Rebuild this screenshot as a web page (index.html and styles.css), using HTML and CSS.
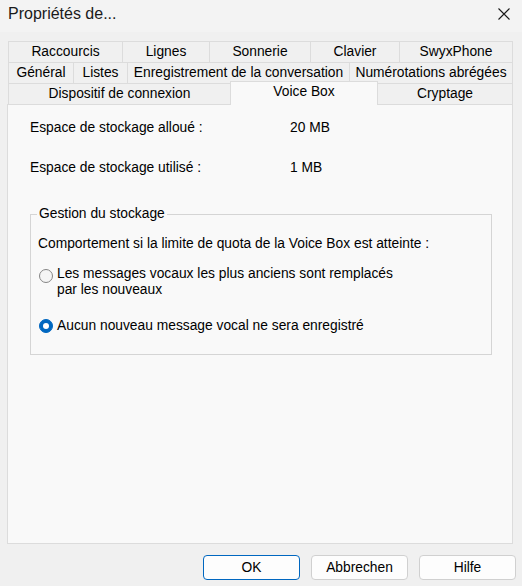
FILE: index.html
```html
<!DOCTYPE html>
<html lang="fr">
<head>
    <meta charset="UTF-8">
    <meta name="viewport" content="width=device-width, initial-scale=1.0">
    <title>Propriétés de...</title>
    <link rel="stylesheet" href="styles.css">
</head>
<body>
    <div class="titlebar">
        <span class="title">Propriétés de...</span>
        <button class="close" aria-label="Fermer">
            <svg width="12" height="12" viewBox="0 0 12 12">
                <path d="M0.5 0.5 L11.5 11.5 M11.5 0.5 L0.5 11.5" stroke="#1a1a1a" stroke-width="1.1" fill="none"/>
            </svg>
        </button>
    </div>

    <div class="tabs">
        <div class="tab-row row1">
            <div class="tab">Raccourcis</div>
            <div class="tab">Lignes</div>
            <div class="tab">Sonnerie</div>
            <div class="tab">Clavier</div>
            <div class="tab">SwyxPhone</div>
        </div>
        <div class="tab-row row2">
            <div class="tab">Général</div>
            <div class="tab">Listes</div>
            <div class="tab">Enregistrement de la conversation</div>
            <div class="tab">Numérotations abrégées</div>
        </div>
        <div class="tab-row row3">
            <div class="tab">Dispositif de connexion</div>
            <div class="tab active">Voice Box</div>
            <div class="tab">Cryptage</div>
        </div>
    </div>

    <div class="panel">
        <div class="info-row">
            <span class="info-label">Espace de stockage alloué :</span>
            <span>20 MB</span>
        </div>
        <div class="info-row">
            <span class="info-label">Espace de stockage utilisé :</span>
            <span>1 MB</span>
        </div>

        <fieldset class="group">
            <legend>Gestion du stockage</legend>
            <p class="group-text">Comportement si la limite de quota de la Voice Box est atteinte :</p>
            <div class="option first">
                <span class="radio"></span>
                <span>Les messages vocaux les plus anciens sont remplacés<br>par les nouveaux</span>
            </div>
            <div class="option second">
                <span class="radio checked"></span>
                <span>Aucun nouveau message vocal ne sera enregistré</span>
            </div>
        </fieldset>
    </div>

    <div class="buttons">
        <button class="btn default">OK</button>
        <button class="btn">Abbrechen</button>
        <button class="btn">Hilfe</button>
    </div>
</body>
</html>
```

FILE: styles.css
```css
body {
    margin: 0;
    width: 522px;
    height: 586px;
    background-color: #f0f0f0;
    font-family: "Liberation Sans", Arial, sans-serif;
    font-size: 13.8px;
    color: #000;
    overflow: hidden;
}

.titlebar {
    height: 32px;
    display: flex;
    align-items: center;
    justify-content: space-between;
    padding: 0 12px 4px 8px;
    box-sizing: border-box;
    background-color: #f3f3f3;
}

.title {
    font-size: 16px;
    color: #1a1a1a;
}

.close {
    border: none;
    background: none;
    padding: 0;
    width: 12px;
    height: 12px;
    display: flex;
}

.tabs {
    margin: 9px 9px 0 8px;
}

.tab-row {
    display: grid;
    height: 21px;
}

.row1 {
    grid-template-columns: 114px 87px 101px 89px 114px;
}

.row2 {
    grid-template-columns: 65px 54px 222px 164px;
}

.row3 {
    grid-template-columns: 222px 148px 135px;
}

.tab {
    height: 21px;
    box-sizing: border-box;
    border-top: 1px solid #dcdcdc;
    border-left: 1px solid #dcdcdc;
    background-color: #f0f0f0;
    text-align: center;
    line-height: 20px;
    white-space: nowrap;
}

.tab:last-child {
    border-right: 1px solid #dcdcdc;
}

.tab.active {
    position: relative;
    z-index: 1;
    height: 24px;
    margin-top: -2px;
    border-right: 1px solid #dcdcdc;
    background-color: #f9f9f9;
    line-height: 19px;
}

.row3 .tab.active + .tab {
    border-left: none;
}

.panel {
    height: 440px;
    margin: 0 9px 0 7px;
    box-sizing: border-box;
    border: 1px solid #dcdcdc;
    background-color: #f9f9f9;
    padding: 15px 0 0 22px;
}

.info-row {
    display: flex;
    line-height: 16px;
    margin-bottom: 24px;
}

.info-label {
    width: 260px;
}

.group {
    width: 462px;
    box-sizing: border-box;
    margin: 30px 0 0 0;
    padding: 14px 7px 20px 7px;
    border: 1px solid #d5d5d5;
    min-inline-size: 0;
}

.group legend {
    padding: 0 2px;
    margin-left: -1px;
    line-height: 16px;
}

.group-text {
    margin: 0;
    line-height: 16px;
}

.option {
    display: flex;
    gap: 4px;
    line-height: 16px;
}

.option.first {
    margin-top: 14px;
    align-items: flex-start;
}

.option.first .radio {
    margin-top: 3px;
}

.option.second {
    margin-top: 20px;
    align-items: center;
}

.radio {
    flex: none;
    width: 14px;
    height: 14px;
    margin-left: 1px;
    box-sizing: border-box;
    border-radius: 50%;
    border: 1px solid #858585;
    background-color: #f5f5f5;
}

.radio.checked {
    display: flex;
    align-items: center;
    justify-content: center;
    border-color: #0067c0;
    background-color: #0067c0;
}

.radio.checked::after {
    content: "";
    width: 6px;
    height: 6px;
    border-radius: 50%;
    background-color: #fff;
}

.buttons {
    display: flex;
    justify-content: flex-end;
    gap: 11px;
    margin-top: 11px;
    padding-right: 6px;
}

.btn {
    width: 97px;
    height: 25px;
    box-sizing: border-box;
    border: 1px solid #d0d0d0;
    border-radius: 4px;
    background-color: #fdfdfd;
    font-family: "Liberation Sans", Arial, sans-serif;
    font-size: 13.8px;
    color: #000;
    padding: 0;
}

.btn.default {
    border-color: #0067c0;
}
```
